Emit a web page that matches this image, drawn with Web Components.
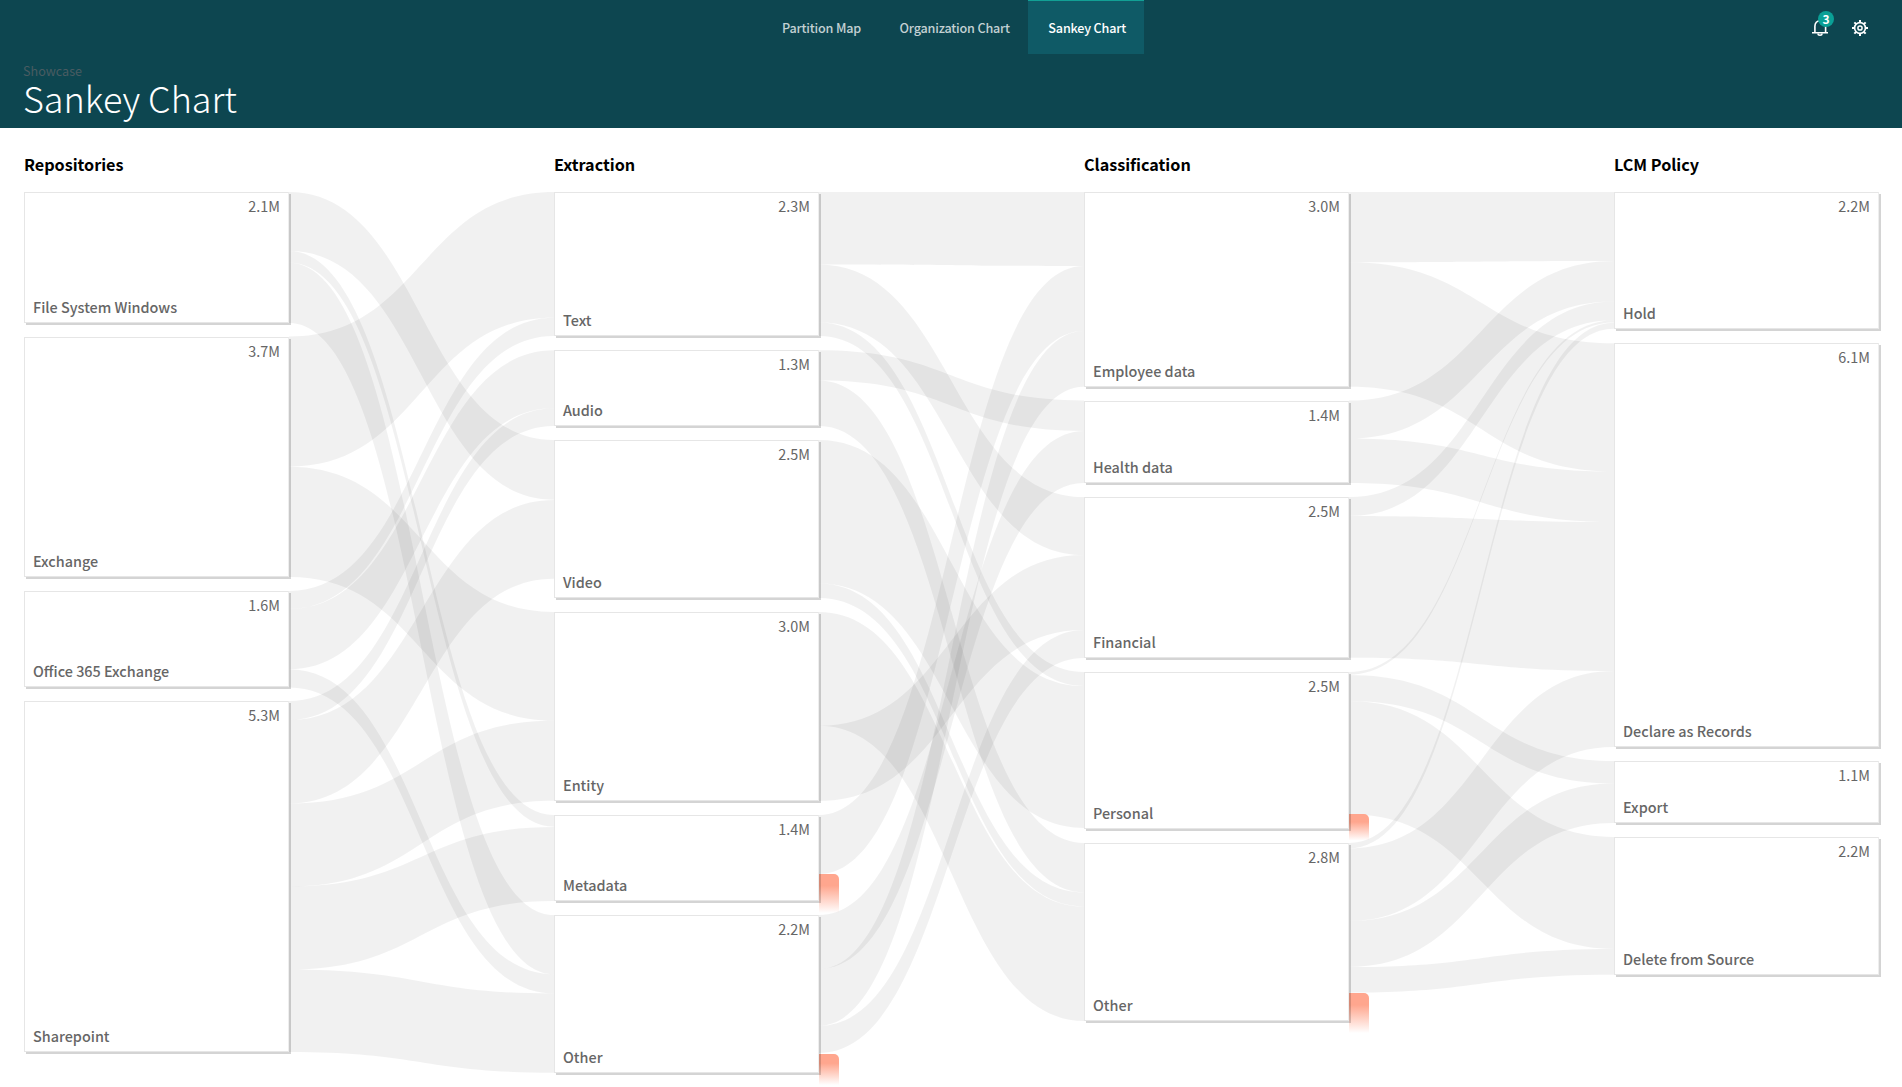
<!DOCTYPE html>
<html lang="en">
<head>
<meta charset="utf-8">
<title>Sankey Chart</title>
<style>
  html, body { margin: 0; height: 100%; background: #fff; }
  body { overflow: hidden; font-family: "Noto Sans CJK SC", "Noto Sans", sans-serif; }
</style>
</head>
<body>
<sankey-app></sankey-app>

<script>
const define = (name, cls) => customElements.define(name, cls);
const shadow = (host, html) => {
  const root = host.attachShadow({ mode: "open" });
  const tpl = document.createElement("template");
  tpl.innerHTML = html;
  root.appendChild(tpl.content.cloneNode(true));
  return root;
};

/* Node tuples: label, value, top, bottom */
const COLUMNS = [
  { title: "Repositories", nodes: [
    ["File System Windows", "2.1M", 192, 323], ["Exchange", "3.7M", 337, 577],
    ["Office 365 Exchange", "1.6M", 591, 687], ["Sharepoint", "5.3M", 701, 1052]] },
  { title: "Extraction", nodes: [
    ["Text", "2.3M", 192, 336], ["Audio", "1.3M", 350, 426], ["Video", "2.5M", 440, 598],
    ["Entity", "3.0M", 612, 801], ["Metadata", "1.4M", 815, 901], ["Other", "2.2M", 915, 1073]] },
  { title: "Classification", nodes: [
    ["Employee data", "3.0M", 192, 387], ["Health data", "1.4M", 401, 483],
    ["Financial", "2.5M", 497, 658], ["Personal", "2.5M", 672, 829], ["Other", "2.8M", 843, 1021]] },
  { title: "LCM Policy", nodes: [
    ["Hold", "2.2M", 192, 329], ["Declare as Records", "6.1M", 343, 747],
    ["Export", "1.1M", 761, 823], ["Delete from Source", "2.2M", 837, 975]] }
];

/* Link tuples: source top, source bottom, target top, target bottom */
const FLOWS = [
  { links: [
    [192,251,440,499.7],[251,262.7,815,826.7],[262.7,323,915,974.3],
    [336.5,466.7,192,317.7],[466.7,577,612,720.7],
    [591,609,317.7,336],[609,669.3,350.3,408.3],[669.3,687.5,974.3,993.5],
    [701,720,408.3,426],[720,803.5,500,578.7],[803.5,886.5,720.7,800.7],
    [886.5,969.5,827,901],[969.5,1052,993.5,1072.7]], losses: [] },
  { links: [
    [192,264.4,192,266],[264.4,322.5,497,555],[322.5,336,672,686],
    [350.3,380.5,400.5,431],[380.5,426,843,892.3],
    [440,583.5,686,828],[583.5,598,892.3,906.5],
    [612,725.7,906.5,1021],[725.7,801,555,630],
    [815,874,266,331],[915,969,431,483],[969,1025.8,331,386.7],[1025.8,1053,630,658]],
    losses: [[874,27],[1054,19]] },
  { links: [
    [192,262.3,192,261],[262.3,386.7,343.3,471.5],
    [400.5,438.5,261,301.5],[438.5,483,471.5,522],
    [497,516,301.5,320.3],[516,657.7,522,671],
    [672,674.7,320.3,322.5],[675,701,761,783.5],[701,814.3,837,949],
    [843,848.3,322.7,328.7],[848.3,921,671,747],[921,967,783.5,823],[967,992.7,949,974.7]],
    losses: [[814,14.5],[993,28]] }
];
const TOP = 192, BOTTOM = 1087, GAP = 265;

define("nav-tab", class extends HTMLElement {
  constructor() {
    super();
    shadow(this, `<style>
      :host { display: flex; align-items: center; box-sizing: border-box; height: 54px; padding: 0 17.7px 0 20.8px;
        border-top: 1px solid transparent; color: #c3d1d3; font-size: 12.6px; letter-spacing: -.18px; font-weight: 500; line-height: 18px; white-space: nowrap; }
      :host([active]) { background: #0f5a66; border-top-color: #12a095; color: #fff; }
    </style><slot></slot>`);
  }
});

define("bell-button", class extends HTMLElement {
  constructor() {
    super();
    shadow(this, `<style>
      :host { display: block; position: relative; width: 18px; height: 18px; }
      svg { display: block; }
      .badge { position: absolute; left: 7px; top: -8px; width: 16px; height: 16px; border-radius: 50%;
        background: #0aa096; color: #fff; font-size: 12px; font-weight: 700; line-height: 15px; text-align: center; }
    </style>
    <svg width="18" height="18" viewBox="0 0 18 18" fill="none" stroke="#fff" stroke-width="1.6">
      <path d="M1 13.8H17M3.9 13.5V7.2C3.9 4 6 1.8 9 1.8S14.6 4 14.6 7.2V13.5"/>
      <path d="M7 14.6a2 1.7 0 0 0 4 0"/>
    </svg><span class="badge"><slot></slot></span>`);
  }
});

define("gear-button", class extends HTMLElement {
  constructor() {
    super();
    let teeth = "";
    for (let i = 0; i < 8; i++) teeth += `<path d="M9 3.4V1" transform="rotate(${i * 45} 9 9)"/>`;
    shadow(this, `<style>:host { display: block; width: 18px; height: 18px; } svg { display: block; }</style>
    <svg width="18" height="18" viewBox="0 0 18 18" fill="none" stroke="#fff">
      <circle cx="9" cy="9" r="5.4" stroke-width="1.6"/><circle cx="9" cy="9" r="2.1" stroke-width="1.5"/>
      <g stroke-width="2">${teeth}</g></svg>`);
  }
});

define("app-header", class extends HTMLElement {
  constructor() {
    super();
    shadow(this, `<style>
      :host { display: block; height: 128px; background: #0d4650; box-sizing: border-box; }
      .bar { display: grid; grid-template-columns: 1fr auto 1fr; height: 54px; }
      nav { display: flex; padding-left: 3px; }
      .tools { display: flex; gap: 22px; justify-content: flex-end; align-items: center; padding: 2px 33px 0 0; }
      .crumb { margin: 7px 0 0 23px; height: 19px; font-size: 12.6px; line-height: 20px; color: #495c62; }
      h1 { margin: 0 0 0 23px; height: 40px; font-size: 36px; line-height: 35px; font-weight: 300; letter-spacing: -.05px; color: #fff; white-space: nowrap; }
    </style>
    <div class="bar"><span></span>
      <nav><nav-tab>Partition Map</nav-tab><nav-tab>Organization Chart</nav-tab><nav-tab active>Sankey Chart</nav-tab></nav>
      <div class="tools"><bell-button>3</bell-button><gear-button></gear-button></div>
    </div>
    <div class="crumb">Showcase</div>
    <h1>Sankey Chart</h1>`);
  }
});

define("sankey-node", class extends HTMLElement {
  constructor() {
    super();
    shadow(this, `<style>
      :host { display: flex; flex-direction: column; justify-content: space-between; box-sizing: border-box;
        width: 265px; padding: 3px 8px 5px; background: #fff; border: 1px solid #e6e6e6; border-right-color: #eee;
        box-shadow: 2px 2px 0 rgba(0,0,0,.17); color: #666; font-size: 14.4px; line-height: 20px; }
      .value { text-align: right; }
      .label { font-weight: 500; white-space: nowrap; }
    </style><div class="value"><slot name="value"></slot></div><div class="label"><slot></slot></div>`);
  }
});

define("sankey-column", class extends HTMLElement {
  constructor() {
    super();
    shadow(this, `<style>
      :host { display: flex; flex-direction: column; width: 265px; position: relative; z-index: 1; }
      h2 { margin: 0; height: 64px; box-sizing: border-box; padding-top: 23px; font-size: 16.2px; line-height: 26px; letter-spacing: -.02px; font-weight: 700; color: #000; }
      .stack { display: flex; flex-direction: column; gap: 14px; }
    </style><h2><slot name="title"></slot></h2><div class="stack"><slot></slot></div>`);
  }
});

define("sankey-flow", class extends HTMLElement {
  set data({ links, losses }) {
    const ribbon = ([a, b, c, d]) => {
      const m = GAP / 2;
      return `<path d="M0 ${a - TOP}C${m} ${a - TOP} ${m} ${c - TOP} ${GAP} ${c - TOP}V${d - TOP}C${m} ${d - TOP} ${m} ${b - TOP} 0 ${b - TOP}Z"/>`;
    };
    const loss = ([y, h]) =>
      `<path fill="url(#fade)" d="M0 ${y - TOP}H15a5 5 0 0 1 5 5V${y - TOP + h + 12}H0Z"/>`;
    shadow(this, `<style>
      :host { display: block; width: ${GAP}px; padding-top: 64px; }
      svg { display: block; }
    </style>
    <svg width="${GAP}" height="${BOTTOM - TOP}">
      <defs><linearGradient id="fade" x1="0" y1="0" x2="0" y2="1">
        <stop offset="0" stop-color="#ffa68e"/><stop offset=".3" stop-color="#ffa68e"/><stop offset="1" stop-color="#ffa68e" stop-opacity="0"/>
      </linearGradient></defs>
      <g fill="#000" fill-opacity=".053">${links.map(ribbon).join("")}</g>
      ${losses.map(loss).join("")}
    </svg>`);
  }
});

define("sankey-chart", class extends HTMLElement {
  connectedCallback() {
    const root = shadow(this, `<style>
      :host { display: flex; align-items: flex-start; height: 959px; padding-left: 24px; overflow: hidden; }
    </style>`);
    COLUMNS.forEach((col, i) => {
      const c = document.createElement("sankey-column");
      c.innerHTML = `<span slot="title">${col.title}</span>` + col.nodes.map(([label, value, y0, y1]) =>
        `<sankey-node style="height:${y1 - y0}px"><span slot="value">${value}</span>${label}</sankey-node>`).join("");
      root.appendChild(c);
      if (FLOWS[i]) {
        const f = document.createElement("sankey-flow");
        f.data = FLOWS[i];
        root.appendChild(f);
      }
    });
  }
});

define("sankey-app", class extends HTMLElement {
  constructor() {
    super();
    shadow(this, `<style>:host { display: block; }</style><app-header></app-header><sankey-chart></sankey-chart>`);
  }
});
</script>
</body>
</html>
